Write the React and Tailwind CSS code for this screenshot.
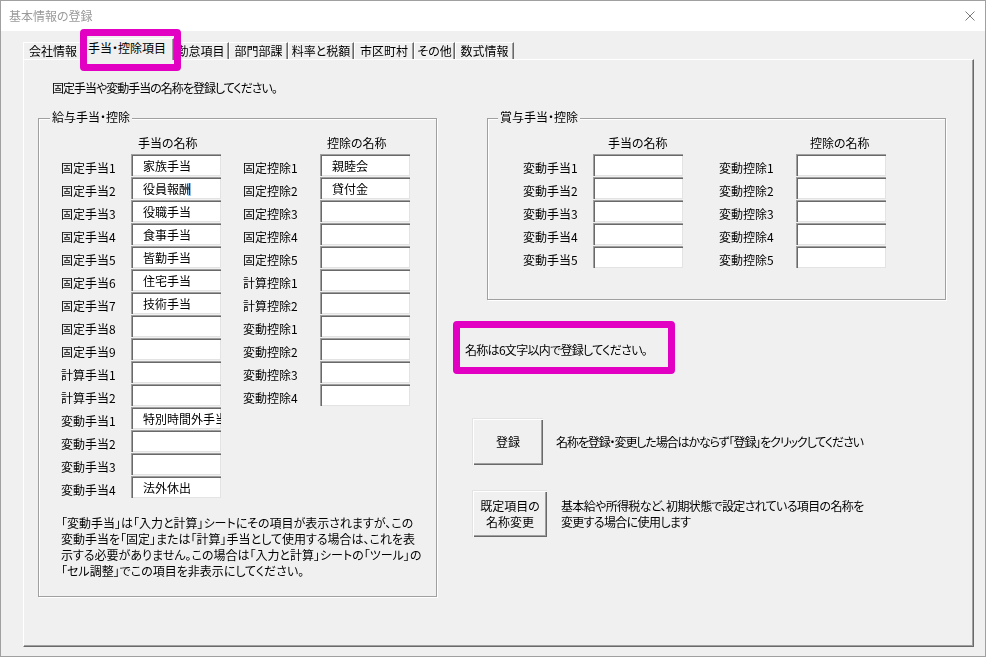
import React from "react";

const leftRows = [
  ["固定手当1", "家族手当"],
  ["固定手当2", "役員報酬", true],
  ["固定手当3", "役職手当"],
  ["固定手当4", "食事手当"],
  ["固定手当5", "皆勤手当"],
  ["固定手当6", "住宅手当"],
  ["固定手当7", "技術手当"],
  ["固定手当8", ""],
  ["固定手当9", ""],
  ["計算手当1", ""],
  ["計算手当2", ""],
  ["変動手当1", "特別時間外手当"],
  ["変動手当2", ""],
  ["変動手当3", ""],
  ["変動手当4", "法外休出"],
];

const rightRows = [
  ["固定控除1", "親睦会"],
  ["固定控除2", "貸付金"],
  ["固定控除3", ""],
  ["固定控除4", ""],
  ["固定控除5", ""],
  ["計算控除1", ""],
  ["計算控除2", ""],
  ["変動控除1", ""],
  ["変動控除2", ""],
  ["変動控除3", ""],
  ["変動控除4", ""],
];

const bonusA = ["変動手当1", "変動手当2", "変動手当3", "変動手当4", "変動手当5"];
const bonusB = ["変動控除1", "変動控除2", "変動控除3", "変動控除4", "変動控除5"];

function Field({ text, sel }) {
  return (
    <div className="h-[22px] w-[90px] bg-white shadow-[inset_1px_1px_0_#a0a0a0,inset_2px_2px_0_#696969,inset_-1px_-1px_0_#e3e3e3] flex items-center pl-[12px] overflow-hidden whitespace-nowrap leading-[16px] pt-[1px]">
      {sel ? (
        <span className="relative">
          {text}
          <span className="absolute right-0 top-[2px] w-[3px] h-[13px] bg-[#9ccbf2] mix-blend-multiply" />
        </span>
      ) : (
        text
      )}
    </div>
  );
}

function Row({ label, value, sel, labelW }) {
  return (
    <div className="flex items-start h-[23px]">
      <div className={`${labelW} pt-[6px] leading-[16px] whitespace-nowrap`}>{label}</div>
      <Field text={value} sel={sel} />
    </div>
  );
}

function Header({ labelW, pad, text }) {
  return (
    <div className="flex h-[19px]">
      <div className={labelW} />
      <div className={`${pad} leading-[16px] whitespace-nowrap`}>{text}</div>
    </div>
  );
}

function Button({ children, w }) {
  return (
    <div
      className={`${w} h-[47px] shrink-0 bg-[#f0f0f0] border-t border-l border-[#e3e3e3] shadow-[inset_1px_1px_0_#fff,inset_-1px_-1px_0_#696969,inset_-2px_-2px_0_#a0a0a0] flex flex-col items-center justify-center leading-[16px] text-center`}
    >
      {children}
    </div>
  );
}

const tabs = [
  { t: "会社情報", w: "w-[64px]", extra: "justify-start pl-[5px]" },
  { t: "手当・控除項目", w: "w-[89px]", sel: true },
  { t: "勤怠項目", w: "w-[57px]" },
  { t: "部門部課", w: "w-[59px]" },
  { t: "料率と税額", w: "w-[66px]" },
  { t: "市区町村", w: "w-[60px]" },
  { t: "その他", w: "w-[41px]" },
  { t: "数式情報", w: "w-[59px]" },
];

export default function App() {
  return (
    <div className="relative w-[986px] h-[657px] bg-[#f0f0f0] border border-[#a0a0a0] flex flex-col overflow-hidden font-['Noto_Sans_CJK_JP',sans-serif] text-[12px] text-black [font-feature-settings:'palt']">
      {/* Title bar */}
      <div className="h-[30px] shrink-0 bg-white flex items-center justify-between pl-[8px] pr-[10px]">
        <span className="text-[#9a9a9a] leading-[16px]">基本情報の登録</span>
        <svg width="10" height="10" viewBox="0 0 10 10">
          <path d="M0.5 0.5 L9.5 9.5 M9.5 0.5 L0.5 9.5" stroke="#7a7a7a" strokeWidth="1" fill="none" />
        </svg>
      </div>

      {/* Tabs */}
      <div className="flex items-end h-[21px] mt-[7px] ml-[22px] shrink-0">
        {tabs.map((tab) =>
          tab.sel ? (
            <div
              key={tab.t}
              className={`${tab.w} -mx-[2px] -mb-[1px] h-[22px] relative z-10 bg-[#f0f0f0] border-l border-t border-white border-r border-r-[#696969] shadow-[inset_-1px_0_0_#a0a0a0] flex justify-start pl-[2px] pt-[1px] leading-[16px] whitespace-nowrap`}
            >
              {tab.t}
            </div>
          ) : (
            <div
              key={tab.t}
              className={`${tab.w} h-[17px] bg-[#f0f0f0] border-l border-t border-white border-r border-r-[#696969] shadow-[inset_-1px_0_0_#a0a0a0] flex ${tab.extra || "justify-center"} leading-[16px] whitespace-nowrap`}
            >
              {tab.t}
            </div>
          )
        )}
      </div>

      {/* Panel */}
      <div className="ml-[22px] w-[951px] h-[588px] shrink-0 border-l border-t border-white border-r border-b border-r-[#696969] border-b-[#696969] shadow-[inset_-1px_-1px_0_#a0a0a0] flex flex-col">
        <div className="ml-[28px] mt-[20px] leading-[16px] tracking-[-1px]">固定手当や変動手当の名称を登録してください。</div>

        <div className="flex mt-[22px] ml-[14px]">
          {/* Group 1 */}
          <div className="relative w-[399px] h-[479px] shrink-0 border border-[#a0a0a0] shadow-[inset_1px_1px_0_#fff,1px_1px_0_#fff] pl-[22px] pt-[16px]">
            <span className="absolute -top-[10px] left-[11px] px-[2px] bg-[#f0f0f0] leading-[16px]">給与手当・控除</span>
            <div className="flex">
              <div className="flex flex-col">
                <Header labelW="w-[70px]" pad="pl-[7px]" text="手当の名称" />
                {leftRows.map(([l, v, s]) => (
                  <Row key={l} label={l} value={v} sel={s} labelW="w-[70px]" />
                ))}
              </div>
              <div className="flex flex-col ml-[22px]">
                <Header labelW="w-[77px]" pad="pl-[7px]" text="控除の名称" />
                {rightRows.map(([l, v]) => (
                  <Row key={l} label={l} value={v} labelW="w-[77px]" />
                ))}
              </div>
            </div>
            <div className="mt-[16px] leading-[16px] whitespace-nowrap">
              <div>「変動手当」は「入力と計算」シートにその項目が表示されますが、この</div>
              <div>変動手当を「固定」または「計算」手当として使用する場合は、これを表</div>
              <div>示する必要がありません。この場合は「入力と計算」シートの「ツール」の</div>
              <div>「セル調整」でこの項目を非表示にしてください。</div>
            </div>
          </div>

          {/* Right column */}
          <div className="ml-[28px] flex flex-col">
            <div className="relative ml-[22px] w-[459px] h-[182px] border border-[#a0a0a0] shadow-[inset_1px_1px_0_#fff,1px_1px_0_#fff] pl-[35px] pt-[16px]">
              <span className="absolute -top-[10px] left-[10px] px-[2px] bg-[#f0f0f0] leading-[16px]">賞与手当・控除</span>
              <div className="flex">
                <div className="flex flex-col">
                  <Header labelW="w-[70px]" pad="pl-[15px]" text="手当の名称" />
                  {bonusA.map((l) => (
                    <Row key={l} label={l} value="" labelW="w-[70px]" />
                  ))}
                </div>
                <div className="flex flex-col ml-[36px]">
                  <Header labelW="w-[77px]" pad="pl-[14px]" text="控除の名称" />
                  {bonusB.map((l) => (
                    <Row key={l} label={l} value="" labelW="w-[77px]" />
                  ))}
                </div>
              </div>
            </div>

            <div className="mt-[42px] leading-[16px] tracking-[-0.7px]">名称は6文字以内で登録してください。</div>

            <div className="flex items-center mt-[60px] ml-[7px]">
              <Button w="w-[71px]">登録</Button>
              <div className="ml-[13px] leading-[16px] whitespace-nowrap tracking-[-1.1px]">名称を登録・変更した場合はかならず「登録」をクリックしてください</div>
            </div>

            <div className="flex items-center mt-[25px] ml-[7px]">
              <Button w="w-[75px]">
                <span>既定項目の</span>
                <span>名称変更</span>
              </Button>
              <div className="ml-[14px] leading-[16px] whitespace-nowrap tracking-[-0.65px]">
                <div>基本給や所得税など、初期状態で設定されている項目の名称を</div>
                <div>変更する場合に使用します</div>
              </div>
            </div>
          </div>
        </div>
      </div>

      {/* Magenta annotation boxes */}
      <div className="absolute left-[79px] top-[28px] w-[101px] h-[42px] border-[7px] border-[#e200c2] rounded-[4px] z-20 pointer-events-none" />
      <div className="absolute left-[452px] top-[320px] w-[222px] h-[53px] border-[7px] border-[#e200c2] rounded-[4px] z-20 pointer-events-none" />
    </div>
  );
}
